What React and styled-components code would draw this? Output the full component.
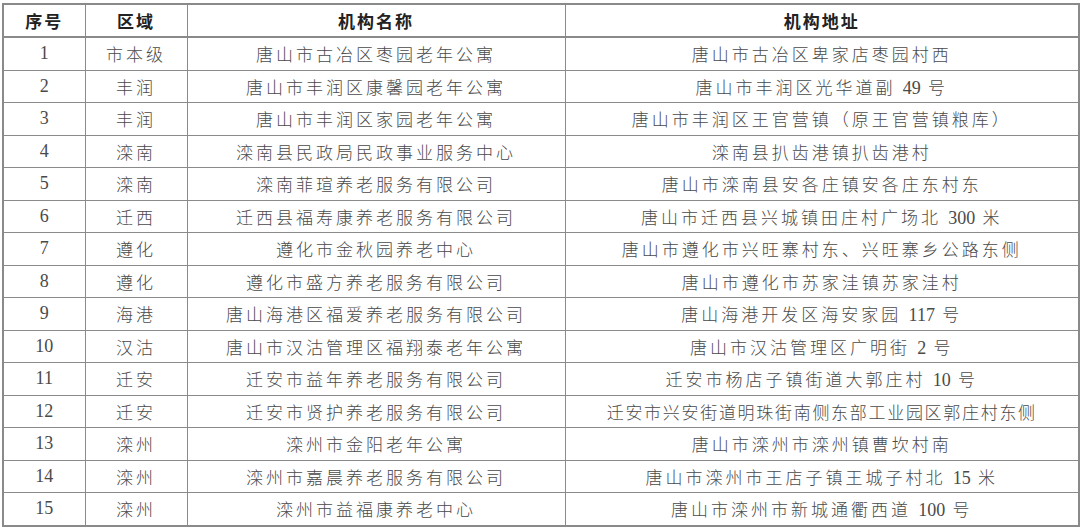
import styled, { createGlobalStyle } from 'styled-components';

const GlobalStyle = createGlobalStyle`
    html, body {
        margin: 0;
        padding: 0;
        background: #ffffff;
    }
`;

const Page = styled.div`
    width: 1080px;
    height: 530px;
    padding: 3px 2px 0 2px;
    box-sizing: border-box;
    background: #ffffff;
`;

const Table = styled.table`
    width: 1076px;
    border-collapse: collapse;
    table-layout: fixed;
    border: 2px solid #8a8a8a;
    font-family: "Liberation Serif", "Noto Sans CJK SC", serif;
`;

const HeadCell = styled.th`
    height: 31px;
    padding: 0;
    border: 1px solid #8a8a8a;
    border-bottom-width: 2px;
    font-family: "Noto Sans CJK SC", sans-serif;
    font-weight: 700;
    font-size: 17px;
    letter-spacing: 2px;
    color: #222222;
    text-align: center;
    vertical-align: middle;
`;

const Cell = styled.td`
    height: 31.5px;
    padding: 0;
    border: 1px solid #8a8a8a;
    font-size: ${(props) => (props.$num ? '18px' : '17px')};
    letter-spacing: ${(props) => props.$spacing || '3px'};
    color: #4a4a4a;
    text-align: center;
    vertical-align: middle;
    white-space: nowrap;
    font-weight: 300;
`;

const Digits = styled.span`
    font-size: 18px;
    letter-spacing: 0;
`;

const rows = [
    ['1', '市本级', '唐山市古冶区枣园老年公寓', '唐山市古冶区卑家店枣园村西'],
    ['2', '丰润', '唐山市丰润区康馨园老年公寓', '唐山市丰润区光华道副 49 号'],
    ['3', '丰润', '唐山市丰润区家园老年公寓', '唐山市丰润区王官营镇（原王官营镇粮库）'],
    ['4', '滦南', '滦南县民政局民政事业服务中心', '滦南县扒齿港镇扒齿港村'],
    ['5', '滦南', '滦南菲瑄养老服务有限公司', '唐山市滦南县安各庄镇安各庄东村东'],
    ['6', '迁西', '迁西县福寿康养老服务有限公司', '唐山市迁西县兴城镇田庄村广场北 300 米'],
    ['7', '遵化', '遵化市金秋园养老中心', '唐山市遵化市兴旺寨村东、兴旺寨乡公路东侧'],
    ['8', '遵化', '遵化市盛方养老服务有限公司', '唐山市遵化市苏家洼镇苏家洼村'],
    ['9', '海港', '唐山海港区福爱养老服务有限公司', '唐山海港开发区海安家园 117 号'],
    ['10', '汉沽', '唐山市汉沽管理区福翔泰老年公寓', '唐山市汉沽管理区广明街 2 号'],
    ['11', '迁安', '迁安市益年养老服务有限公司', '迁安市杨店子镇街道大郭庄村 10 号'],
    ['12', '迁安', '迁安市贤护养老服务有限公司', '迁安市兴安街道明珠街南侧东部工业园区郭庄村东侧'],
    ['13', '滦州', '滦州市金阳老年公寓', '唐山市滦州市滦州镇曹坎村南'],
    ['14', '滦州', '滦州市嘉晨养老服务有限公司', '唐山市滦州市王店子镇王城子村北 15 米'],
    ['15', '滦州', '滦州市益福康养老中心', '唐山市滦州市新城通衢西道 100 号'],
];

const widths = [82, 102, 378, 514];

// keep digits tight while the chinese text is spaced out
function Text({ value }) {
    const parts = value.split(/(\d+)/).filter(Boolean);
    return parts.map((part, i) =>
        /\d/.test(part) ? <Digits key={i}>{part}</Digits> : part
    );
}

function App() {
    return (
        <Page>
            <GlobalStyle />
            <Table>
                <colgroup>
                    {widths.map((w) => (
                        <col key={w} style={{ width: w }} />
                    ))}
                </colgroup>
                <thead>
                    <tr>
                        <HeadCell>序号</HeadCell>
                        <HeadCell>区域</HeadCell>
                        <HeadCell>机构名称</HeadCell>
                        <HeadCell>机构地址</HeadCell>
                    </tr>
                </thead>
                <tbody>
                    {rows.map((row) => (
                        <tr key={row[0]}>
                            <Cell $num $spacing="0">{row[0]}</Cell>
                            <Cell>{row[1]}</Cell>
                            <Cell>{row[2]}</Cell>
                            <Cell $spacing={row[3].length > 22 ? '1.7px' : '3px'}>
                                <Text value={row[3]} />
                            </Cell>
                        </tr>
                    ))}
                </tbody>
            </Table>
        </Page>
    );
}

export default App;
